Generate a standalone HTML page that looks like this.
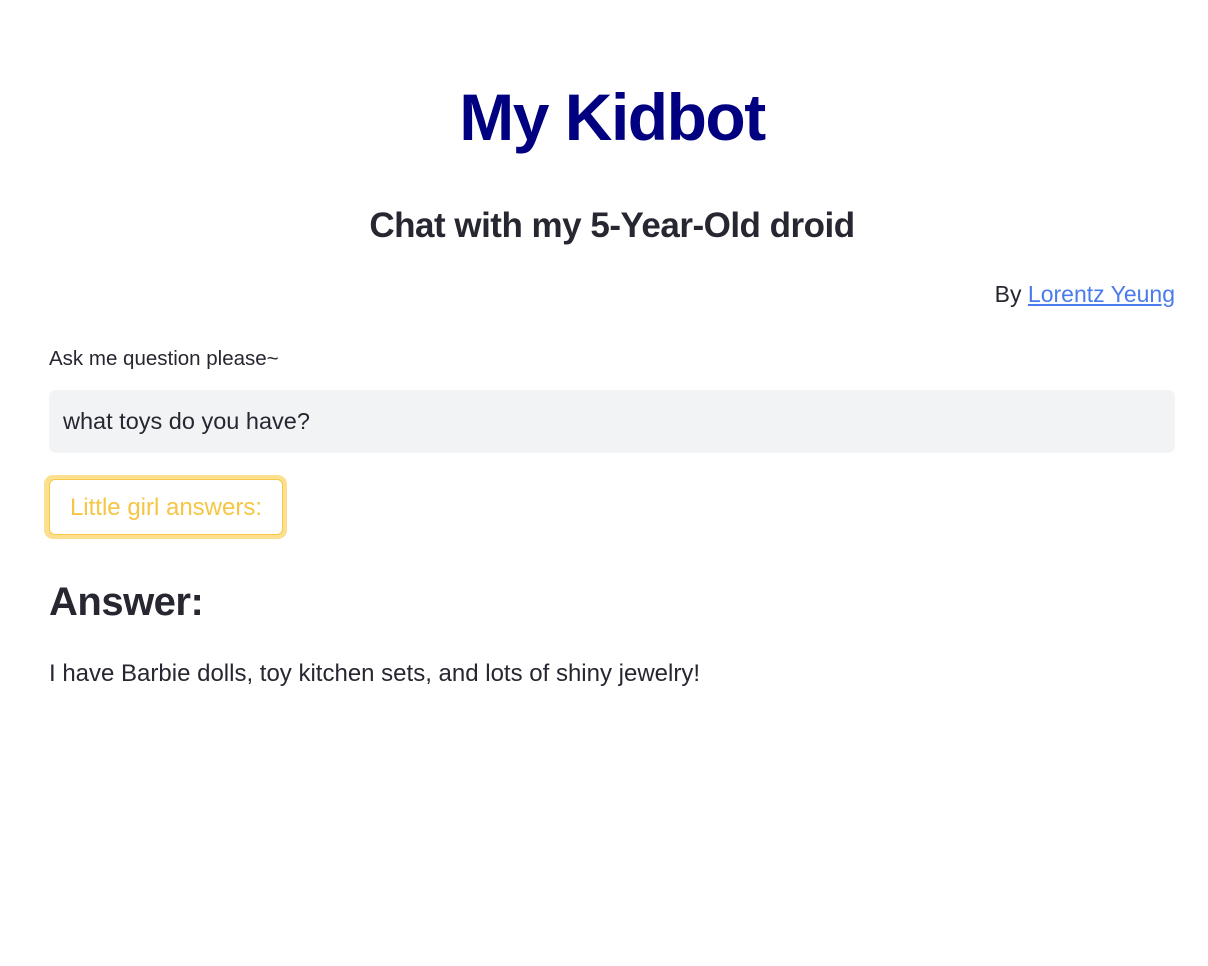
<!DOCTYPE html>
<html><head><meta charset="utf-8"><style>
body{margin:0;width:1208px;height:966px;background:#fff;font-family:"Liberation Sans",sans-serif;color:#262730;position:relative;overflow:hidden}
.a{position:absolute;white-space:nowrap;line-height:1}
</style></head><body>
<div class="a" style="left:0;width:1224px;text-align:center;top:84px;font-size:66px;font-weight:bold;color:#000080;letter-spacing:-1.5px">My Kidbot</div>
<div class="a" style="left:0;width:1224px;text-align:center;top:208px;font-size:35px;font-weight:bold;letter-spacing:-0.5px">Chat with my 5-Year-Old droid</div>
<div class="a" style="right:33px;top:283px;font-size:23px">By <span style="color:#4a7bec;text-decoration:underline">Lorentz Yeung</span></div>
<div class="a" style="left:49px;top:349px;font-size:20.5px">Ask me question please~</div>
<div style="position:absolute;left:49px;top:390px;width:1126px;height:63px;background:#f2f3f5;border-radius:7px"></div>
<div class="a" style="left:63px;top:410px;font-size:23.5px">what toys do you have?</div>
<div style="position:absolute;left:44px;top:475px;width:243px;height:64px;background:#fce08f;border-radius:9px"></div>
<div style="position:absolute;left:49px;top:479px;width:232px;height:54px;background:#fff;border:1px solid #f7c948;border-radius:6px"></div>
<div class="a" style="left:49px;width:234px;text-align:center;top:496px;font-size:24px;color:#f6c543">Little girl answers:</div>
<div class="a" style="left:49px;top:582px;font-size:40px;font-weight:bold;letter-spacing:-0.5px">Answer:</div>
<div class="a" style="left:49px;top:662px;font-size:24px">I have Barbie dolls, toy kitchen sets, and lots of shiny jewelry!</div>
</body></html>
